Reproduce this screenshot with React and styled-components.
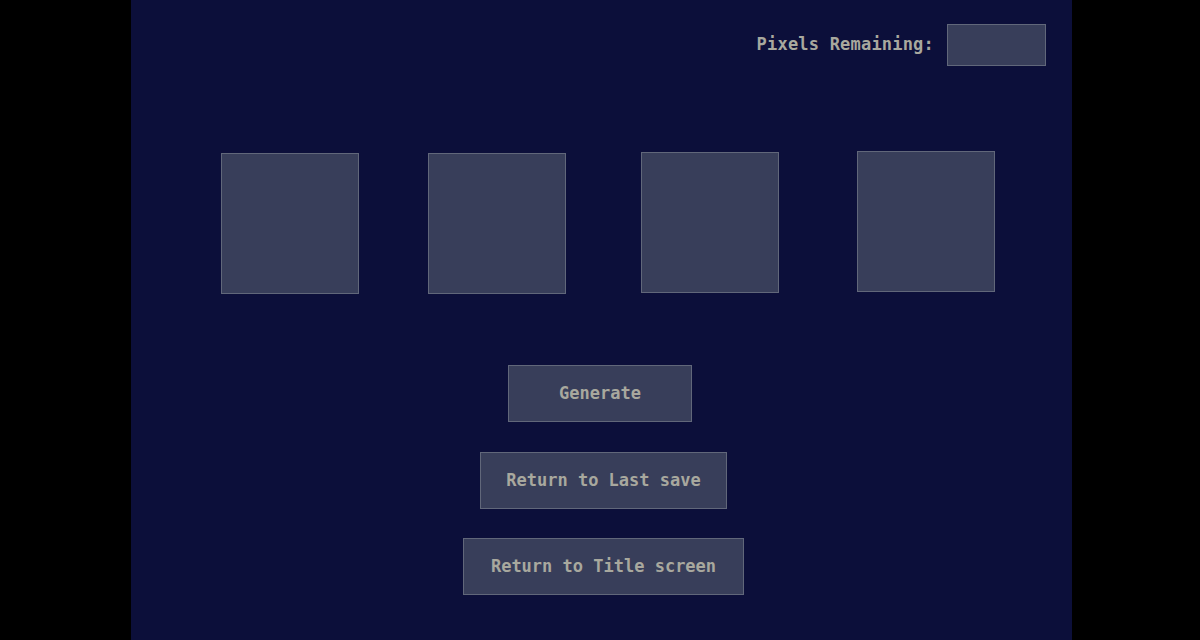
import React from "react";
import styled, { createGlobalStyle } from "styled-components";

const Global = createGlobalStyle`
  html, body {
    margin: 0;
    background: #000000;
  }
  body {
    font-family: "DejaVu Sans Mono", "Liberation Mono", monospace;
  }
`;

const Panel = styled("div")`
  width: 941px;
  min-height: 640px;
  margin-left: 131px;
  background: #0c0f3a;
  box-sizing: border-box;
  padding-top: 24px;
  display: flex;
  flex-direction: column;
`;

const Header = styled("div")`
  display: flex;
  justify-content: flex-end;
  align-items: center;
  gap: 13px;
  padding-right: 26px;
`;

const Label = styled("span")`
  color: #a8a89e;
  font-size: 17px;
  font-weight: bold;
  letter-spacing: 0.2px;
  padding-bottom: 2px;
`;

const Counter = styled("div")`
  width: 99px;
  height: 42px;
  box-sizing: border-box;
  background: #383e5a;
  border: 1px solid #61677a;
`;

const Tiles = styled("div")`
  display: flex;
  align-items: flex-start;
  margin-top: 86px;
  padding-left: 90px;
`;

const Tile = styled("div")`
  width: 138px;
  height: 141px;
  box-sizing: border-box;
  background: #383e5a;
  border: 1px solid #61677a;
  margin-left: ${(p) => p.$gap || 0}px;
  margin-top: ${(p) => p.$lift || 0}px;
`;

const Menu = styled("div")`
  display: flex;
  flex-direction: column;
  align-items: center;
  margin-top: 71px;
`;

const Btn = styled("button")`
  width: ${(p) => p.$w}px;
  height: 57px;
  margin-left: ${(p) => p.$shift || 0}px;
  margin-top: ${(p) => p.$space || 0}px;
  box-sizing: border-box;
  background: #383e5a;
  border: 1px solid #61677a;
  border-radius: 0;
  color: #a8a89e;
  font-family: "DejaVu Sans Mono", "Liberation Mono", monospace;
  font-size: 17px;
  font-weight: bold;
  padding: 0 0 2px;
  cursor: pointer;
`;

function App() {
  return (
    <>
      <Global />
      <Panel>
        <Header>
          <Label>Pixels Remaining:</Label>
          <Counter />
        </Header>
        <Tiles>
          <Tile $lift={1} />
          <Tile $lift={1} $gap={69} />
          <Tile $gap={75} />
          <Tile $lift={-1} $gap={78} />
        </Tiles>
        <Menu>
          <Btn $w={184} $shift={-3}>Generate</Btn>
          <Btn $w={247} $shift={4} $space={30}>Return to Last save</Btn>
          <Btn $w={281} $shift={4} $space={29}>Return to Title screen</Btn>
        </Menu>
      </Panel>
    </>
  );
}

export default App;
